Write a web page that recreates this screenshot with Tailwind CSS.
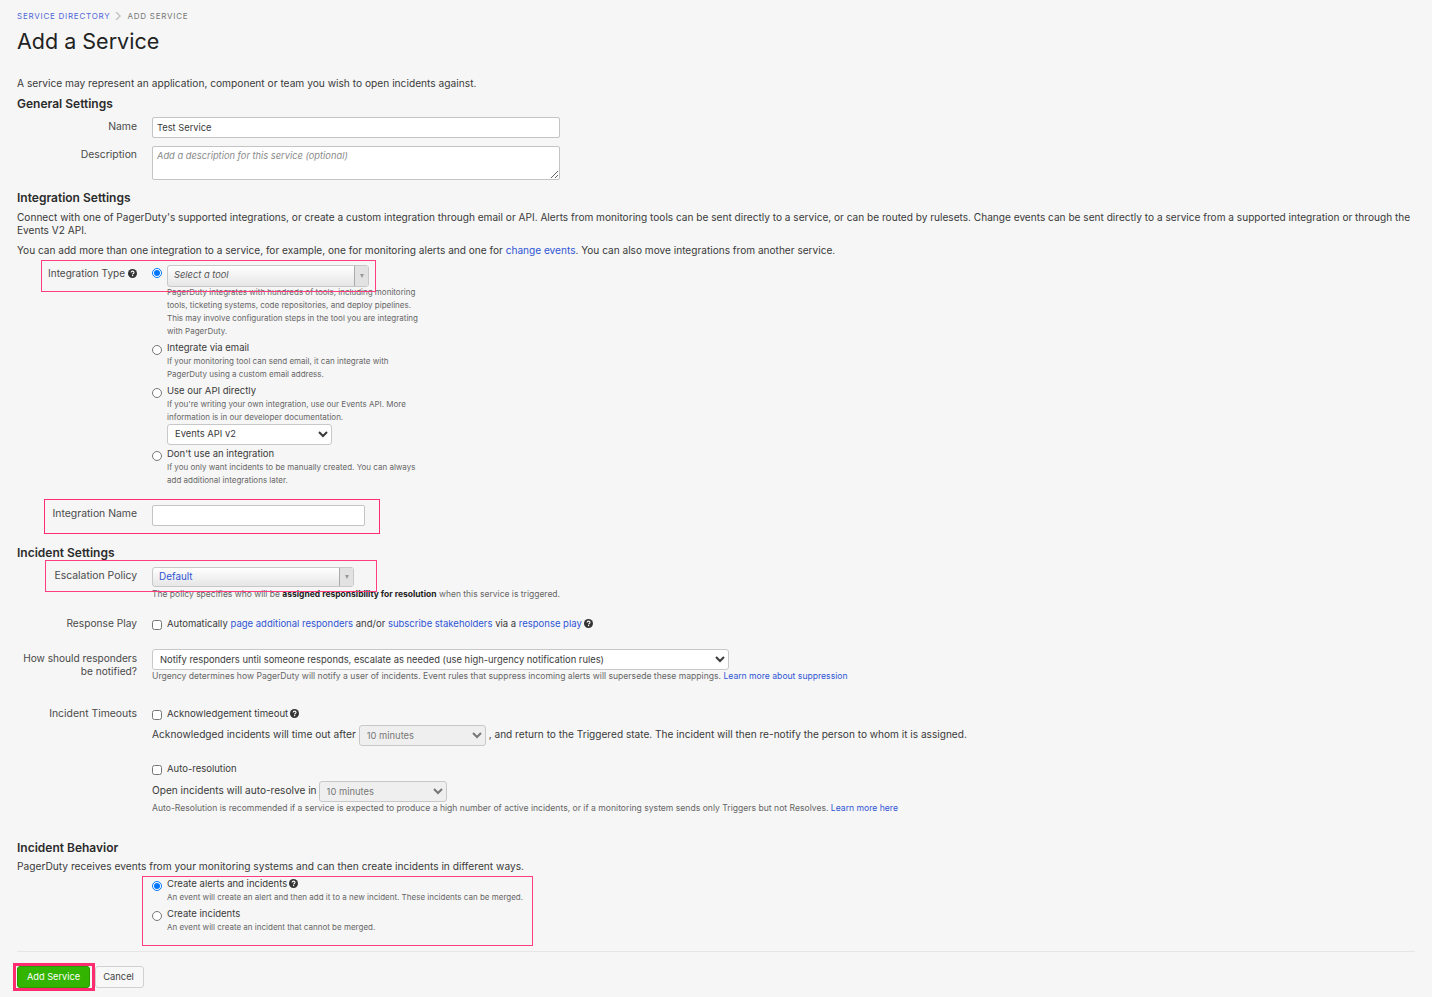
<!DOCTYPE html>
<html>

<head>
  <meta charset="utf-8" />
  <title>Add a Service</title>
  <script src="https://cdn.jsdelivr.net/npm/@tailwindcss/browser@4"></script>
</head>

<body class="bg-[#f6f6f6]">
  <main class="relative h-[997px] overflow-hidden px-[17px] font-['Inter',sans-serif] text-[10.2px] leading-[13px] text-[#3a3a3a]">
    <!-- breadcrumb + title -->
    <div class="pt-[10px] h-[22px] flex items-center text-[8px] tracking-[0.75px] uppercase">
      <a class="text-[#4f66d8]">Service Directory</a>
      <svg class="ml-[5px] mr-[6px] w-[6px] h-[8px]" viewBox="0 0 6 8"><path d="M1 0l4 4-4 4" fill="none" stroke="#c4c4c4" stroke-width="1.5" /></svg>
      <span class="text-[#777]">Add Service</span>
    </div>
    <h1 class="mt-[5px] text-[21.5px] leading-[28px] text-[#222]">Add a Service</h1>
    <p class="mt-[21px] leading-[14px]">A service may represent an application, component or team you wish to open incidents against.</p>

    <!-- general settings -->
    <h2 class="mt-[6px] text-[12px] leading-[16px] font-semibold text-[#2b2b2b]">General Settings</h2>
    <div class="mt-[5px] flex gap-[15px]">
      <label class="w-[120px] pt-[2.5px] text-right text-[10.4px] text-[#4a4a4a]">Name</label>
      <input class="w-[408px] h-[21px] px-[4px] pb-[1px] bg-white border border-[#c4c4c4] rounded-[2px] text-[9.3px]" value="Test Service" />
    </div>
    <div class="mt-[8px] flex gap-[15px]">
      <label class="w-[120px] pt-[2px] text-right text-[10.4px] text-[#4a4a4a]">Description</label>
      <textarea class="block w-[408px] h-[34px] px-[4px] py-[3px] bg-white border border-[#c4c4c4] rounded-[2px] text-[9.3px] leading-[12px] italic placeholder:text-[#8a8a8a]" placeholder="Add a description for this service (optional)"></textarea>
    </div>

    <!-- integration settings -->
    <h2 class="mt-[10px] text-[12px] leading-[16px] font-semibold text-[#2b2b2b]">Integration Settings</h2>
    <p class="mt-[5px] w-[1400px] text-[10.1px]">Connect with one of PagerDuty's supported integrations, or create a custom integration through email or API. Alerts from monitoring tools can be sent directly to a service, or can be routed by rulesets. Change events can be sent directly to a service from a supported integration or through the<br />Events V2 API.</p>
    <p class="mt-[7px] text-[10.1px]">You can add more than one integration to a service, for example, one for monitoring alerts and one for <a class="text-[#2f55d4]">change events</a>. You can also move integrations from another service.</p>

    <div class="mt-[8px] flex gap-[15px]">
      <div class="w-[120px] pt-[2px] flex justify-end items-center gap-[3px] self-start text-[10px] text-[#4a4a4a]">
        Integration Type
        <svg class="w-[9px] h-[9px]" viewBox="0 0 10 10"><circle cx="5" cy="5" r="5" fill="#333" /><path d="M3.4 3.9C3.5 2.9 4.2 2.4 5.1 2.4 6 2.4 6.7 3 6.7 3.8 6.7 5 5.1 4.9 5.1 6" fill="none" stroke="#fff" stroke-width="1.2" /><rect x="4.4" y="6.7" width="1.4" height="1.3" fill="#fff" /></svg>
      </div>
      <div class="w-[270px] text-[8px] leading-[13px] text-[#666] whitespace-nowrap">
        <div class="flex items-start gap-[5px] h-[21px]">
          <input type="radio" name="tool" checked class="m-0 mt-[3px] w-[10px] h-[10px]" />
          <div class="w-[202px] h-[22px] flex items-stretch border border-[#c8c8c8] rounded-[3px] bg-gradient-to-b from-white to-[#e6e6e6]">
            <span class="flex-1 pl-[6px] text-[9.3px] leading-[18px] italic text-[#555]">Select a tool</span>
            <span class="w-[14px] flex items-center justify-center border-l border-[#aaa] bg-[#e2e2e2]"><span class="border-x-[2.5px] border-t-[4px] border-x-transparent border-t-[#999]"></span></span>
          </div>
        </div>
        <p class="ml-[15px]">PagerDuty integrates with hundreds of tools, including monitoring<br />tools, ticketing systems, code repositories, and deploy pipelines.<br />This may involve configuration steps in the tool you are integrating<br />with PagerDuty.</p>

        <label class="mt-[4px] h-[13px] flex items-start gap-[5px] text-[9.5px] text-[#3a3a3a]"><input type="radio" name="tool" class="m-0 mt-[3px] w-[10px] h-[10px]" /><span class="leading-[11px]">Integrate via email</span></label>
        <p class="ml-[15px]">If your monitoring tool can send email, it can integrate with<br />PagerDuty using a custom email address.</p>

        <label class="mt-[4px] h-[13px] flex items-start gap-[5px] text-[9.5px] text-[#3a3a3a]"><input type="radio" name="tool" class="m-0 mt-[3px] w-[10px] h-[10px]" /><span class="leading-[11px]">Use our API directly</span></label>
        <p class="ml-[15px]">If you're writing your own integration, use our Events API. More<br />information is in our developer documentation.</p>
        <select class="ml-[15px] block w-[165px] h-[21px] pl-[3px] pb-[2px] bg-white border border-[#c8c8c8] rounded-[3px] text-[9.4px] text-[#3a3a3a]">
          <option>Events API v2</option>
        </select>

        <label class="mt-[3px] h-[13px] flex items-start gap-[5px] text-[9.5px] text-[#3a3a3a]"><input type="radio" name="tool" class="m-0 mt-[3px] w-[10px] h-[10px]" /><span class="leading-[11px]">Don't use an integration</span></label>
        <p class="ml-[15px]">If you only want incidents to be manually created. You can always<br />add additional integrations later.</p>
      </div>
    </div>

    <div class="mt-[18px] flex gap-[15px]">
      <label class="w-[120px] pt-[2px] text-right text-[10.4px] text-[#4a4a4a]">Integration Name</label>
      <input class="w-[213px] h-[21px] px-[4px] bg-white border border-[#c4c4c4] rounded-[2px] text-[9.3px]" />
    </div>

    <!-- incident settings -->
    <h2 class="mt-[19px] text-[12px] leading-[16px] font-semibold text-[#2b2b2b]">Incident Settings</h2>
    <div class="mt-[6px] flex gap-[15px]">
      <label class="w-[120px] pt-[2px] text-right text-[10.4px] text-[#4a4a4a]">Escalation Policy</label>
      <div class="w-[202px] h-[20px] flex items-stretch border border-[#c8c8c8] rounded-[3px] bg-gradient-to-b from-white to-[#e6e6e6]">
        <span class="flex-1 pl-[6px] text-[9.9px] leading-[17px] text-[#2f55d4]">Default</span>
        <span class="w-[14px] flex items-center justify-center border-l border-[#aaa] bg-[#e2e2e2]"><span class="border-x-[2.5px] border-t-[4px] border-x-transparent border-t-[#999]"></span></span>
      </div>
    </div>
    <p class="mt-[1px] ml-[135px] text-[8.5px] leading-[12px] text-[#666]">The policy specifies who will be <b class="text-[#222]">assigned responsibility for resolution</b> when this service is triggered.</p>

    <div class="mt-[17px] flex gap-[15px]">
      <label class="w-[120px] text-right text-[10.2px] text-[#4a4a4a]">Response Play</label>
      <div class="flex items-center gap-[5px] text-[9.5px]">
        <input type="checkbox" class="m-0 mt-[2px] w-[10px] h-[10px]" />
        <span>Automatically <a class="text-[#2f55d4]">page additional responders</a> and/or <a class="text-[#2f55d4]">subscribe stakeholders</a> via a <a class="text-[#2f55d4]">response play</a></span>
        <svg class="-ml-[3px] w-[9px] h-[9px]" viewBox="0 0 10 10"><circle cx="5" cy="5" r="5" fill="#333" /><path d="M3.4 3.9C3.5 2.9 4.2 2.4 5.1 2.4 6 2.4 6.7 3 6.7 3.8 6.7 5 5.1 4.9 5.1 6" fill="none" stroke="#fff" stroke-width="1.2" /><rect x="4.4" y="6.7" width="1.4" height="1.3" fill="#fff" /></svg>
      </div>
    </div>

    <div class="mt-[19px] flex gap-[15px]">
      <label class="w-[120px] pt-[3px] text-right text-[10.15px] text-[#4a4a4a]">How should responders<br />be notified?</label>
      <div class="text-[8.6px] text-[#666]">
        <select class="block w-[577px] h-[21px] pl-[3px] bg-white border border-[#c8c8c8] rounded-[3px] text-[9.4px] text-[#3a3a3a]">
          <option>Notify responders until someone responds, escalate as needed (use high-urgency notification rules)</option>
        </select>
        <p class="whitespace-nowrap">Urgency determines how PagerDuty will notify a user of incidents. Event rules that suppress incoming alerts will supersede these mappings. <a class="text-[#2f55d4]">Learn more about suppression</a></p>
      </div>
    </div>

    <div class="mt-[24px] flex gap-[15px]">
      <label class="w-[120px] text-right text-[10.4px] text-[#4a4a4a]">Incident Timeouts</label>
      <div class="flex items-center gap-[5px] text-[9.6px]">
        <input type="checkbox" class="m-0 mt-[2px] w-[10px] h-[10px]" />
        <span>Acknowledgement timeout</span>
        <svg class="-ml-[3px] w-[9px] h-[9px]" viewBox="0 0 10 10"><circle cx="5" cy="5" r="5" fill="#333" /><path d="M3.4 3.9C3.5 2.9 4.2 2.4 5.1 2.4 6 2.4 6.7 3 6.7 3.8 6.7 5 5.1 4.9 5.1 6" fill="none" stroke="#fff" stroke-width="1.2" /><rect x="4.4" y="6.7" width="1.4" height="1.3" fill="#fff" /></svg>
      </div>
    </div>
    <div class="mt-[5px] ml-[135px] h-[21px] flex items-center gap-[3px] whitespace-nowrap text-[10.2px]">
      <span class="mb-[2px]">Acknowledged incidents will time out after</span>
      <select disabled class="w-[127px] h-[21px] pl-[3px] bg-[#efefef] border border-[#c8c8c8] rounded-[3px] text-[9.4px] text-[#777]"><option>10 minutes</option></select>
      <span class="mb-[2px] text-[10.1px]">, and return to the Triggered state. The incident will then re-notify the person to whom it is assigned.</span>
    </div>

    <div class="mt-[16px] ml-[135px] flex items-center gap-[5px] text-[9.5px]">
      <input type="checkbox" class="m-0 mt-[2px] w-[10px] h-[10px]" />
      <span>Auto-resolution</span>
    </div>
    <div class="mt-[6px] ml-[135px] h-[21px] flex items-center gap-[2px] whitespace-nowrap text-[10.1px]">
      <span class="mb-[2px]">Open incidents will auto-resolve in</span>
      <select disabled class="w-[128px] h-[21px] pl-[3px] bg-[#efefef] border border-[#c8c8c8] rounded-[3px] text-[9.4px] text-[#777]"><option>10 minutes</option></select>
    </div>
    <p class="ml-[135px] text-[8.6px] leading-[12px] text-[#666] whitespace-nowrap">Auto-Resolution is recommended if a service is expected to produce a high number of active incidents, or if a monitoring system sends only Triggers but not Resolves. <a class="text-[#2f55d4]">Learn more here</a></p>

    <!-- incident behavior -->
    <h2 class="mt-[26px] text-[12px] leading-[16px] font-semibold text-[#2b2b2b]">Incident Behavior</h2>
    <p class="mt-[4px]">PagerDuty receives events from your monitoring systems and can then create incidents in different ways.</p>
    <div class="mt-[5px] ml-[135px] text-[8px] leading-[13px] text-[#666]">
      <label class="h-[13px] flex items-start gap-[5px] text-[9.5px] text-[#3a3a3a]">
        <input type="radio" name="behavior" checked class="m-0 mt-[3px] w-[10px] h-[10px]" /><span class="leading-[11px]">Create alerts and incidents</span>
        <svg class="-ml-[3px] mt-[1px] w-[9px] h-[9px]" viewBox="0 0 10 10"><circle cx="5" cy="5" r="5" fill="#333" /><path d="M3.4 3.9C3.5 2.9 4.2 2.4 5.1 2.4 6 2.4 6.7 3 6.7 3.8 6.7 5 5.1 4.9 5.1 6" fill="none" stroke="#fff" stroke-width="1.2" /><rect x="4.4" y="6.7" width="1.4" height="1.3" fill="#fff" /></svg>
      </label>
      <p class="ml-[15px]">An event will create an alert and then add it to a new incident. These incidents can be merged.</p>
      <label class="mt-[4px] h-[13px] flex items-start gap-[5px] text-[9.5px] text-[#3a3a3a]"><input type="radio" name="behavior" class="m-0 mt-[3px] w-[10px] h-[10px]" /><span class="leading-[11px]">Create incidents</span></label>
      <p class="ml-[15px]">An event will create an incident that cannot be merged.</p>
    </div>

    <hr class="mt-[17px] border-[#e6e6e6]" />
    <div class="mt-[14px] flex gap-[5px]">
      <button class="w-[73px] h-[22px] pb-[2px] bg-[#33b400] border border-[#2a9a00] rounded-[3px] text-[9.2px] text-white">Add Service</button>
      <button class="w-[49px] h-[22px] pb-[2px] pr-[2px] bg-[#f8f8f8] border border-[#d0d0d0] rounded-[3px] text-[9.4px] text-[#444]">Cancel</button>
    </div>

    <!-- pink highlight boxes drawn on top of the form -->
    <div class="absolute left-[41px] top-[260px] w-[335px] h-[32px] border border-[#ff3d7f]"></div>
    <div class="absolute left-[44px] top-[499px] w-[336px] h-[35px] border border-[#ff2d6f]"></div>
    <div class="absolute left-[45px] top-[560px] w-[332px] h-[32px] border border-[#ff3d7f]"></div>
    <div class="absolute left-[142px] top-[876px] w-[391px] h-[70px] border border-[#ff3d7f]"></div>
    <div class="absolute left-[13px] top-[963px] w-[82px] h-[28px] border-[3px] border-[#ff2d6f]"></div>
  </main>
</body>

</html>
